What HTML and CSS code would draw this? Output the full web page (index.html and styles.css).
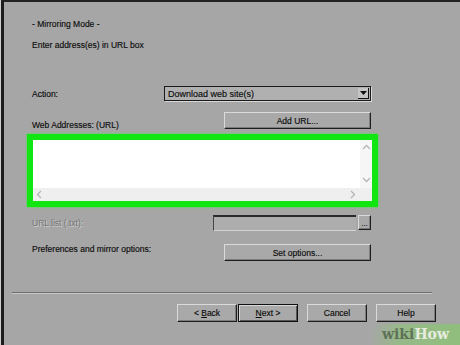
FILE: index.html
```html
<!DOCTYPE html>
<html lang="en">
<head>
  <meta charset="UTF-8">
  <title>Mirroring Mode</title>
  <link rel="stylesheet" href="styles.css">
</head>
<body>
  <div class="window">
    <div class="form">
      <div class="mode">- Mirroring Mode -</div>
      <div class="hint">Enter address(es) in URL box</div>

      <div class="row row-action">
        <span>Action:</span>
        <div class="select">
          <span class="select-text">Download web site(s)</span>
          <span class="select-arrow">
            <svg width="7" height="4" viewBox="0 0 7 4"><polygon points="0,0 7,0 3.5,4" fill="#111"/></svg>
          </span>
        </div>
      </div>

      <div class="row row-add">
        <span class="label-low">Web Addresses: (URL)</span>
        <button class="btn btn-wide">Add URL...</button>
      </div>

      <!-- url box, highlighted -->
      <div class="highlight">
        <div class="urlbox">
          <div class="vscroll">
            <svg width="9" height="6" viewBox="0 0 9 6"><polyline points="1,5 4.5,1.5 8,5" fill="none" stroke="#b5b5b5" stroke-width="1.3"/></svg>
            <svg width="9" height="6" viewBox="0 0 9 6"><polyline points="1,1 4.5,4.5 8,1" fill="none" stroke="#b5b5b5" stroke-width="1.3"/></svg>
          </div>
          <div class="hscroll">
            <svg width="6" height="9" viewBox="0 0 6 9"><polyline points="5,1 1.5,4.5 5,8" fill="none" stroke="#b5b5b5" stroke-width="1.3"/></svg>
            <svg width="6" height="9" viewBox="0 0 6 9"><polyline points="1,1 4.5,4.5 1,8" fill="none" stroke="#b5b5b5" stroke-width="1.3"/></svg>
          </div>
        </div>
      </div>

      <div class="row row-list">
        <span class="disabled">URL list (.txt):</span>
        <div class="field-group">
          <div class="field"></div>
          <button class="btn btn-dots">...</button>
        </div>
      </div>

      <div class="row row-pref">
        <span>Preferences and mirror options:</span>
        <button class="btn btn-wide">Set options...</button>
      </div>
    </div>

    <div class="sep"></div>

    <div class="buttons">
      <button class="btn btn-nav">&lt; <u>B</u>ack</button>
      <button class="btn btn-nav btn-default"><u>N</u>ext &gt;</button>
      <button class="btn btn-nav btn-gap">Cancel</button>
      <button class="btn btn-nav btn-gap">Help</button>
    </div>
  </div>

  <div class="watermark"><span class="wiki">wiki</span><span class="how">How</span></div>
</body>
</html>
```

FILE: styles.css
```css
body {
  margin: 0;
  background: #a6a6a6;
  font-family: "Liberation Sans", Arial, sans-serif;
  font-size: 8.5px;
  color: #0c0c0c;
  -webkit-text-stroke: 0.15px #0c0c0c;
  overflow: hidden;
  border-left: 1px solid #cfcfcf;
  height: 345px;
  position: relative;
}

.window {
  height: 343px;
  border-top: 2px solid #222;
  border-left: 3px solid #1c1c1c;
}

.form {
  width: 339px;
  padding-left: 28px;
}

.mode {
  margin-top: 16px;
  height: 12px;
  line-height: 12px;
}

.hint {
  margin-top: 9px;
  height: 12px;
  line-height: 12px;
}

.row {
  display: flex;
  justify-content: space-between;
  align-items: center;
}

.row-action {
  margin-top: 35px;
  height: 15px;
}

.row-add {
  margin-top: 11px;
  height: 17px;
  align-items: flex-end;
}

.label-low {
  line-height: 10px;
  margin-bottom: -1px;
}

.select {
  width: 205px;
  height: 13px;
  display: flex;
  justify-content: space-between;
  align-items: center;
  background: #b0b0b0;
  border: 1px solid #1a1a1a;
  box-shadow: 1px 1px 0 #d8d8d8;
}

.select-text {
  padding-left: 3px;
  font-size: 9px;
}

.select-arrow {
  width: 11px;
  height: 11px;
  margin-right: 1px;
  display: flex;
  align-items: center;
  justify-content: center;
  background: #c4c4c4;
  border-right: 1px solid #111;
  border-bottom: 1px solid #111;
  box-sizing: border-box;
}

.btn {
  font-family: inherit;
  font-size: 8.5px;
  color: #0c0c0c;
  -webkit-text-stroke: 0.15px #0c0c0c;
  background: #a9a9a9;
  border: 1px solid;
  border-color: #dadada #1e1e1e #1e1e1e #dadada;
  box-shadow: inset -1px -1px 0 #7c7c7c;
  padding: 0;
  margin: 0;
}

.btn-wide {
  width: 147px;
  height: 17px;
}

.highlight {
  margin: 5px 0 0 -5px;
  width: 351px;
  height: 73px;
  box-sizing: border-box;
  border: 6px solid #12e612;
  box-shadow: 0 0 2px #3cf03c;
}

.urlbox {
  height: 100%;
  background: #fff;
  position: relative;
}

.vscroll {
  position: absolute;
  top: 0;
  right: 0;
  width: 12px;
  height: 48px;
  background: #f6f6f6;
  display: flex;
  flex-direction: column;
  justify-content: space-between;
  align-items: center;
  padding: 4px 0 5px;
  box-sizing: border-box;
}

.hscroll {
  position: absolute;
  left: 0;
  right: 0;
  bottom: 0;
  height: 13px;
  background: #efefef;
  display: flex;
  justify-content: space-between;
  align-items: center;
  padding: 0 16px 0 3px;
}

.row-list {
  margin-top: 8px;
  height: 15px;
}

.disabled {
  color: #757575;
  -webkit-text-stroke: 0;
  text-shadow: 1px 1px 0 #cfcfcf;
}

.field-group {
  display: flex;
  align-items: center;
  gap: 2px;
}

.field {
  width: 142px;
  height: 13px;
  background: #adadad;
  border-top: 2px solid #2a2a2a;
  border-left: 1px solid #444;
  border-bottom: 1px solid #d2d2d2;
}

.btn-dots {
  width: 13px;
  height: 15px;
  line-height: 15px;
  font-size: 8px;
}

.row-pref {
  margin-top: 14px;
  height: 17px;
}

.row-pref span {
  align-self: flex-start;
  line-height: 10px;
}

.sep {
  margin: 31px 0 0 8px;
  width: 420px;
  border-top: 1px solid #6e6e6e;
  border-bottom: 1px solid #c8c8c8;
}

.buttons {
  display: flex;
  justify-content: flex-end;
  gap: 1px;
  margin-top: 10px;
  padding-right: 24px;
}

.btn-nav {
  width: 60px;
  height: 18px;
}

.btn-default {
  border-color: #111;
  box-shadow: inset 1px 1px 0 #d6d6d6, inset -1px -1px 0 #555;
}

.btn-gap {
  margin-left: 8px;
}

.watermark {
  position: absolute;
  right: 0;
  bottom: 0;
  width: 88px;
  height: 21px;
  padding-left: 10px;
  box-sizing: border-box;
  background: linear-gradient(100deg, rgba(166, 166, 166, 0) 0%, #98b88a 30%, #8fbf7c 100%);
  font-family: "DejaVu Serif", "Liberation Serif", serif;
  font-weight: bold;
  font-size: 14px;
  line-height: 21px;
  -webkit-text-stroke: 0;
}

.wiki {
  color: #5d7257;
}

.how {
  color: #e6ecdf;
}
```
